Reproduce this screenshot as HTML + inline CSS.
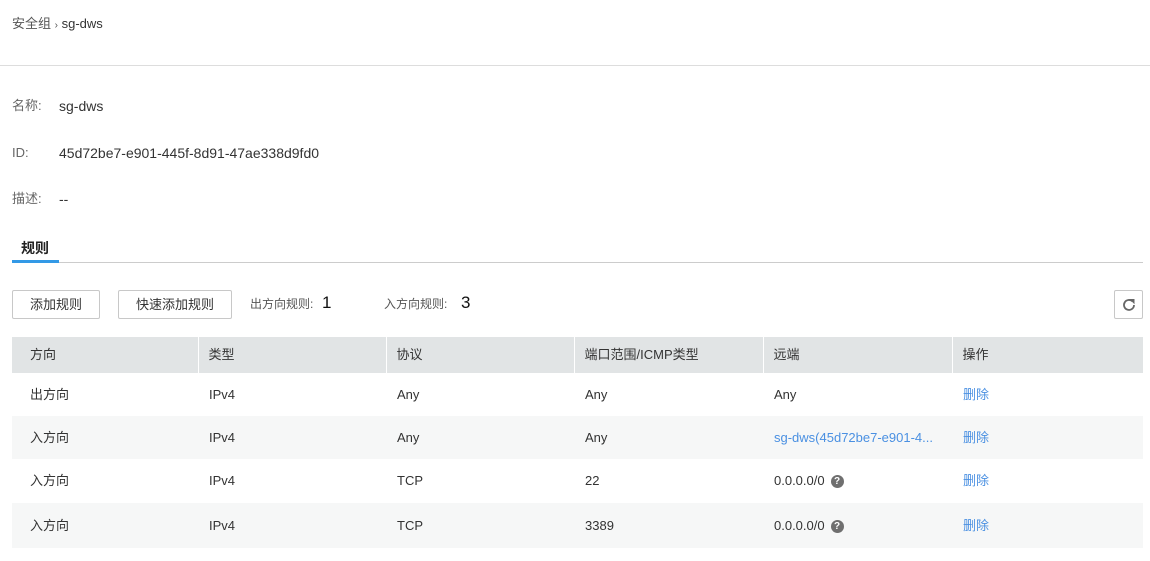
<!DOCTYPE html>
<html><head><meta charset="utf-8"><style>
*{margin:0;padding:0;box-sizing:border-box}
body{width:1150px;height:561px;background:#fff;font-family:"Liberation Sans","Noto Sans CJK SC",sans-serif;font-size:13px;color:#333;position:relative;overflow:hidden}
.a{position:absolute;white-space:nowrap;line-height:16px}
.btn{position:absolute;height:29px;border:1px solid #c8c8c8;border-radius:2px;background:#fff;text-align:center;line-height:27px;font-size:13px;color:#333}
table{position:absolute;left:12px;top:337px;width:1131px;border-collapse:collapse;font-size:13px;table-layout:fixed}
th{background:#e1e4e5;height:36px;text-align:left;font-weight:normal;padding-left:10px;border-left:1px solid #fff;color:#333;line-height:16px;vertical-align:middle}
th:first-child{border-left:none;padding-left:18px}
td{padding-left:11px;color:#333;line-height:16px;vertical-align:middle;white-space:nowrap}
td:first-child{padding-left:18px}
tr.r1 td{height:43px}
tr.r2 td{height:43px;background:#f6f7f7}
tr.r3 td{height:44px}
tr.r4 td{height:45px;background:#f6f7f7}
.lk{color:#4a90e2}
.q{display:inline-block;width:13px;height:13px;border-radius:50%;background:#6f6f6f;color:#fff;font-size:10px;font-weight:bold;text-align:center;line-height:13px;margin-left:6px;vertical-align:middle}
</style></head><body>
<div class="a" style="left:12px;top:16px;font-size:13px;color:#555">安全组 <span style="font-size:10px">›</span> <span style="color:#333">sg-dws</span></div>
<div class="a" style="left:0;top:65px;width:1150px;height:1px;background:#ddd"></div>
<div class="a" style="left:12px;top:98px;color:#666">名称:</div>
<div class="a" style="left:59px;top:98px;font-size:14px">sg-dws</div>
<div class="a" style="left:12px;top:145px;color:#666">ID:</div>
<div class="a" style="left:59px;top:145px;font-size:14px">45d72be7-e901-445f-8d91-47ae338d9fd0</div>
<div class="a" style="left:12px;top:191px;color:#666">描述:</div>
<div class="a" style="left:59px;top:191px;font-size:14px">--</div>
<div class="a" style="left:21px;top:240px;font-size:14px;font-weight:bold;color:#222">规则</div>
<div class="a" style="left:12px;top:262px;width:1131px;height:1px;background:#ccc"></div>
<div class="a" style="left:12px;top:260px;width:47px;height:3px;background:#3399e6"></div>
<div class="btn" style="left:12px;top:290px;width:88px">添加规则</div>
<div class="btn" style="left:118px;top:290px;width:114px">快速添加规则</div>
<div class="a" style="left:250px;top:296px;font-size:12px;color:#555">出方向规则:</div>
<div class="a" style="left:322px;top:294px;font-size:17px;line-height:18px;color:#111">1</div>
<div class="a" style="left:384px;top:296px;font-size:12px;color:#555">入方向规则:</div>
<div class="a" style="left:461px;top:294px;font-size:17px;line-height:18px;color:#111">3</div>
<div class="btn" style="left:1114px;top:290px;width:29px;height:29px">
<svg width="16" height="16" viewBox="0 0 16 16" style="margin-top:6px"><path d="M13 8a5 5 0 1 1-1.5-3.6" fill="none" stroke="#666" stroke-width="1.8"/><path d="M9.5 2.5h3.5v3.5z" fill="#666" stroke="#666" stroke-width="1"/></svg></div>
<table>
<colgroup><col style="width:186px"><col style="width:188px"><col style="width:188px"><col style="width:189px"><col style="width:189px"><col></colgroup>
<tr><th>方向</th><th>类型</th><th>协议</th><th>端口范围/ICMP类型</th><th>远端</th><th>操作</th></tr>
<tr class="r1"><td>出方向</td><td>IPv4</td><td>Any</td><td>Any</td><td>Any</td><td class="lk">删除</td></tr>
<tr class="r2"><td>入方向</td><td>IPv4</td><td>Any</td><td>Any</td><td class="lk">sg-dws(45d72be7-e901-4...</td><td class="lk">删除</td></tr>
<tr class="r3"><td>入方向</td><td>IPv4</td><td>TCP</td><td>22</td><td>0.0.0.0/0<span class="q">?</span></td><td class="lk">删除</td></tr>
<tr class="r4"><td>入方向</td><td>IPv4</td><td>TCP</td><td>3389</td><td>0.0.0.0/0<span class="q">?</span></td><td class="lk">删除</td></tr>
</table>
</body></html>
